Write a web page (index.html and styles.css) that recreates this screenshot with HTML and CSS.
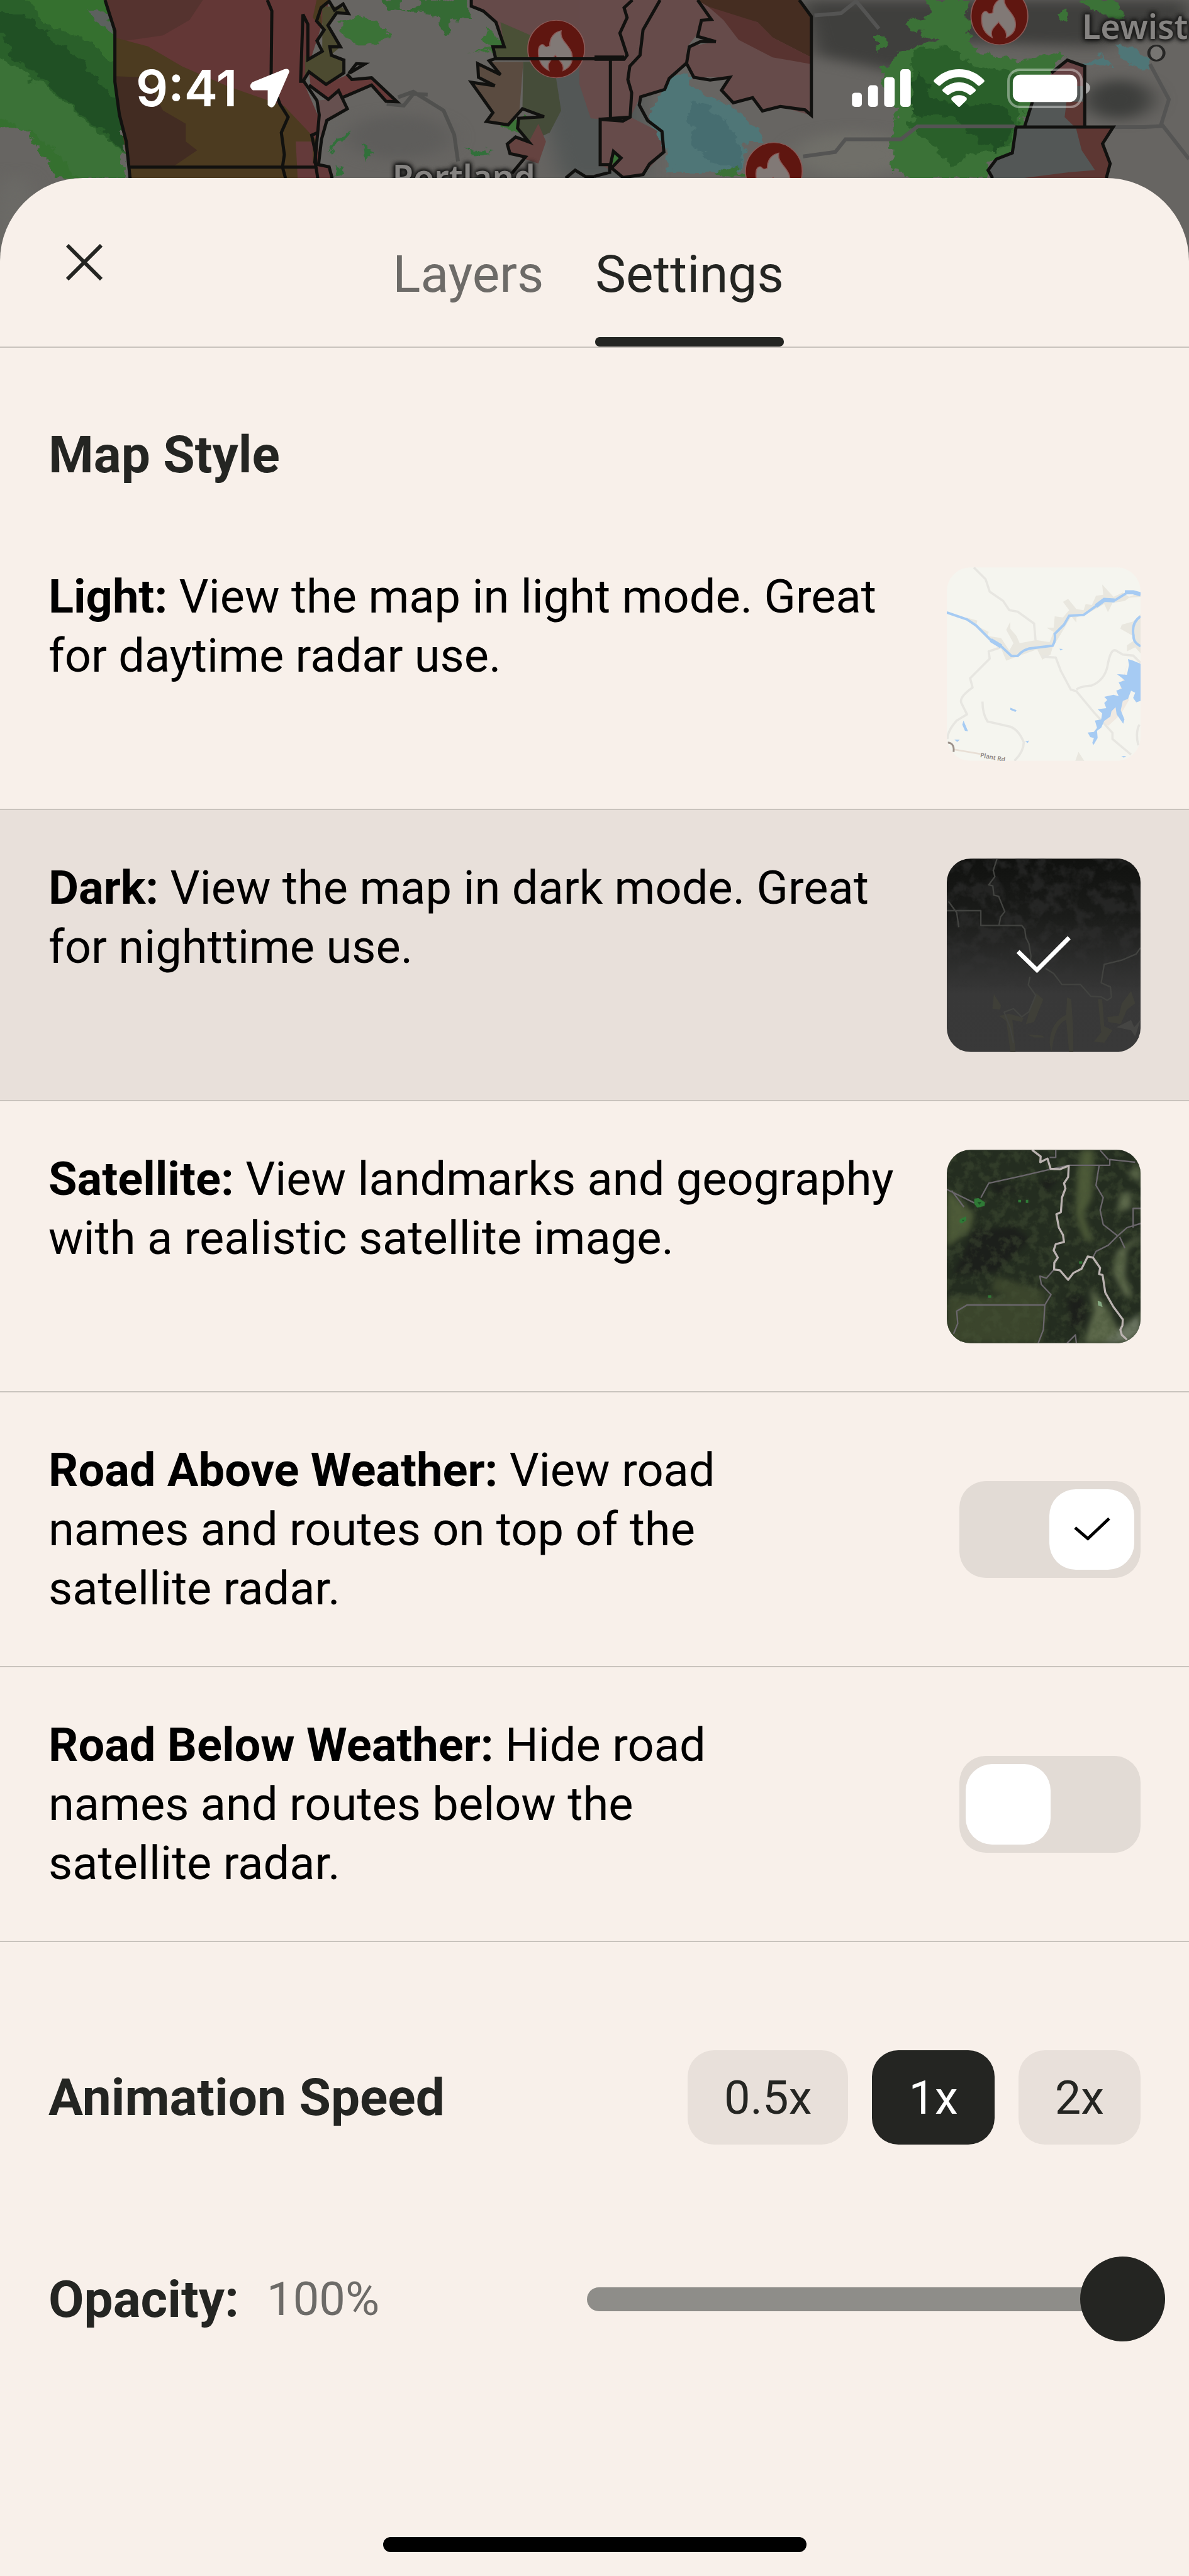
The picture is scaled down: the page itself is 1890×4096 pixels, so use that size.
FILE: index.html
```html
<!DOCTYPE html>
<html lang="en">
<head>
    <meta charset="UTF-8">
    <meta name="viewport" content="width=device-width, initial-scale=1.0">
    <title>Map Settings</title>
    <link rel="stylesheet" href="styles.css">
</head>
<body>

<!-- Radar map behind the sheet -->
<div class="map">
    <svg class="map-art" viewBox="0 0 3136 1568" preserveAspectRatio="none" aria-hidden="true">
        <defs>
            <filter id="rough" x="0" y="0" width="100%" height="100%" color-interpolation-filters="sRGB">
                <feTurbulence type="fractalNoise" baseFrequency="0.03 0.02" numOctaves="4" seed="4"/>
                <feDisplacementMap in="SourceGraphic" scale="50" xChannelSelector="R" yChannelSelector="G"/>
            </filter>
            <filter id="soft" color-interpolation-filters="sRGB"><feGaussianBlur stdDeviation="28"/></filter>
            <g id="fire">
                <ellipse rx="75" ry="130" fill="#5f1610"/>
                <path d="M-47 8C-46-20-38-22-34-20C-26-2-22-14-17-14C-18-50-6-76 13-83C8-40 36-18 41 20C46 60 36 84 18 98C22 66 8 56-2 28C-16 54-26 66-19 98C-40 80-48 50-47 8Z"/>
            </g>
        </defs>
        <rect width="3136" height="1568" fill="#676562"/>
        <g filter="url(#soft)">
            <path d="M2110 0H3136V90L2900 210L2500 190L2380 330L2150 250Z" fill="#3f3f3d"/>
            <ellipse cx="2950" cy="450" rx="90" ry="90" fill="#3d3e3c"/>
            <ellipse cx="2250" cy="700" rx="160" ry="100" fill="#706f69"/>
            <ellipse cx="1050" cy="620" rx="140" ry="100" fill="#5e5d5b"/>
            <path d="M1390 260H1700V806H1480Z" fill="#535756"/>
            <ellipse cx="40" cy="1050" rx="60" ry="260" fill="#6b6a66"/>
        </g>
        <g filter="url(#rough)">
            <path d="M-60-40H280L325 140V806H150L110 700L60 560L-60 600Z" fill="#35702f"/>
            <path d="M-60 160L60 260L180 430L330 700V806H210L120 640L40 560L-60 520Z" fill="#3b7237"/>
            <path d="M-40 0H70L130 120L240 190L330 330V700L230 560L110 380L-20 240Z" fill="#2a602a"/>
            <path d="M-20 60L60 60L200 260L330 480V690L200 500L90 330L20 240Z" fill="#205024"/>
            <path d="M230 40L290 60L300 160L260 120Z" fill="#5c615e"/>
            <path d="M900 90L970 70L1030 150L1000 200H950L900 160Z" fill="#3b7237"/>
            <path d="M1010 0H1060V40H1090L1110 0H1240V80H1200L1185 160L1160 130L1135 60L1080 50L1020 40Z" fill="#356a34"/>
            <path d="M950 640L985 700L960 720ZM880 640L930 590L860 700ZM890 740L920 790H880ZM1230 670L1300 690L1260 710Z" fill="#31703a"/>
            <path d="M1290 130L1340 210L1240 240H1310L1280 180ZM1320 560L1390 520V620Z" fill="#3b7237"/>
        </g>

        <!-- warning zones -->
        <path d="M275 0L303 140V370L315 520L333 640L343 806H755L748 700L840 740L838 520L800 370L870 0Z" fill="#633736"/>
        <path d="M278 0H535L500 90L430 160L308 190L303 140Z" fill="#55332f"/>
        <path d="M303 170L390 210L480 300L600 390L750 480L838 640L830 806H343L315 520L303 370Z" fill="#4c3b20"/>
        <path d="M303 345L385 350L430 500L490 560V640L520 680L460 750H341L333 640L315 520Z" fill="#422c22"/>
        <path d="M780 640H825V740L870 760L875 806H785Z" fill="#643a3a"/>
        <path d="M835 0H870L845 40L850 130L825 80Z" fill="#4c3b20"/>
        <path d="M850 30L900 30L920 62L888 58L865 115L898 212L872 250L905 272V330L860 382L815 325L805 370V250L818 270L850 230Z" fill="#4c4a30"/>
        <path d="M815 330L860 380L915 340L930 362L980 350L1047 455L1018 462L980 385L905 440L893 410L866 450L820 395Z" fill="#673a39"/>
        <path d="M836 455L866 450L893 410L916 492L862 545L845 640Z" fill="#66504f"/>
        <path d="M1240 0H1310L1560 0V260H1305L1300 212H1330L1308 100L1275 50L1243 28Z" fill="#654a49"/>
        <path d="M1320 100L1400 160V260H1305L1300 212H1330Z" fill="#4a5036"/>
        <path d="M1290 280H1380L1370 500L1340 565L1283 550L1300 510L1243 372L1305 388L1262 350L1260 288L1320 338Z" fill="#5a4b40"/>
        <path d="M1380 280H1460L1480 500L1450 600L1400 640L1365 580L1368 535L1435 528L1378 492Z" fill="#454c39"/>
        <path d="M1360 620L1395 642L1420 560L1440 640L1420 740L1385 720L1345 695L1338 652Z" fill="#654340"/>

        <g transform="translate(1568 0)">
            <path d="M-40 0H175L130 130L95 300L100 410L95 530L175 600L183 690L128 790L75 800L15 745V540L-10 535L-40 380Z" fill="#664b4a"/>
            <path d="M175 0H280L305 85L245 210L240 290L185 400L120 440L95 530V300L130 130Z" fill="#664b4a"/>
            <path d="M180 0H270L308 85L282 92L272 165L320 190L250 210L240 288L262 350L355 350L335 408L366 465L417 442L443 502L490 482L572 522V75L540 0Z" fill="#664b4a"/>
            <path d="M270 0H540L572 75V260L470 170L430 100L330 60Z" fill="#452d21"/>
            <path d="M300 30L430 100L470 170L572 260V290L470 260L380 180L340 90Z" fill="#583330"/>
            <g filter="url(#rough)">
                <path d="M205 350L240 320L262 400L360 480L440 600V640L400 640L390 800L280 780L200 780L180 660L140 520L190 400Z" fill="#4f7677"/>
                <path d="M250 450L330 520L390 650V760L310 740L260 650Z" fill="#466d70"/>
                <path d="M1290 290L1340 240L1370 300ZM1370 200L1440 220L1465 320L1400 290Z" fill="#4f7677"/>
                <path d="M880 0H990V210L1050 250L1130 280L1240 230L1130 560L1100 690L1040 730V806H820L780 760L790 700L780 600L800 500L770 430L760 310L810 230L900 180L830 130V90L880 80Z" fill="#3b7237"/>
                <path d="M850 220L930 210L1000 300L1110 330L1130 520L1090 660L990 700L940 750L880 640L830 560L860 460L830 330Z" fill="#2a602a"/>
                <path d="M860 320L880 440L960 470L1060 470L1110 560L1060 690L1000 620L940 520L850 520L830 440Z" fill="#205024"/>
                <path d="M1280 0H1370L1400 80L1330 60ZM1210 60L1260 40L1240 100ZM750 150L780 190L750 240ZM310 790L380 750L400 806Z" fill="#3b7237"/>
            </g>
            <path d="M550 708L635 688L662 630H808L852 572H1110M1370 575H1450L1500 570M1465 290L1515 450L1495 560L1568 720M580 70L650 60L690 5L750 130" fill="none" stroke="#545453" stroke-width="6" vector-effect="non-scaling-stroke"/>
            <path d="M1205 330L1247 272L1293 300V570L1368 575L1340 650L1360 740L1350 806H1050L1038 770L1060 720L1102 692L1112 575L1135 565L1155 450Z" fill="#535756"/>
            <path d="M1205 330L1247 272L1293 300V390H1200Z" fill="#664344"/>
            <path d="M1245 460H1293V570L1368 575L1340 650L1360 740L1350 806H1130L1250 780L1320 770L1285 680L1270 580L1240 530Z" fill="#5d3733"/>
            <path d="M45 690L70 712L48 750Z" fill="#3b7237"/>
        </g>

        <path d="M1020 470L1065 478L1090 425L1128 428M1050 440L1090 415L1170 500L1198 610L1208 730" fill="none" stroke="#50504e" stroke-width="6" vector-effect="non-scaling-stroke"/>

        <g fill="#817976" stroke="#8a5a57" stroke-width="3">
            <use href="#fire" x="1467" y="222"/>
            <use href="#fire" x="2636" y="72"/>
            <use href="#fire" x="2041" y="775"/>
        </g>

        <!-- zone borders -->
        <g fill="none" stroke="#11110f" stroke-width="5">
            <path vector-effect="non-scaling-stroke" d="M277 0L303 140V370L315 520L333 640L343 806M343 756H835M705 0L717 50L715 360L738 470L760 530L742 600L750 700L745 756L753 806M800 368H793L799 65L812 110V270L850 232L836 185L855 135L835 95L847 35L868 5L882 45L905 18L919 62L888 58L865 115L898 212H870L874 250L907 272V330L860 382L815 325L800 365L836 455L842 520L838 600L830 740M815 385L866 450L893 410L916 492L862 545L848 630L840 745L868 755L876 806M905 440L980 385L1018 458L1047 460L980 352L928 360L915 335M920 332L940 288L962 290L923 330M838 600L822 612L832 690V740L838 806M1243 0V28L1275 50L1308 100L1330 212H1300L1307 262M1568 266H1305L1290 275L1320 338L1260 288L1262 350L1305 388L1243 372L1300 510L1283 550L1340 565L1378 492L1435 528L1368 535L1365 580L1395 642L1360 620L1338 652L1345 695L1386 710L1350 785M1492 806L1517 770L1545 800H1568"/>
            <g transform="translate(1568 0)">
                <path vector-effect="non-scaling-stroke" d="M100 0L78 35L86 80L67 150L86 250L78 268H0M0 258H78M42 268V535M173 0L128 135L120 250L93 300L88 360L98 420L94 530L75 548L15 540V745H42L50 685L70 715L45 760L75 803L128 790L145 742L183 688L178 595L140 545L118 475L122 438L185 405L197 355L243 285L250 212L280 188H320L272 165L282 92L308 88L272 0M243 288L262 350L305 362L357 350L335 408L366 465L417 442L443 502L490 482L555 497L572 522V75L540 0M12 540L92 530M0 798L40 780V750M1205 330L1247 272L1293 300V570M1110 575L1368 575L1340 650L1360 740L1350 806M1155 460L1135 570M1112 575L1102 692L1060 720L1038 770L1050 806"/>
            </g>
        </g>
        <ellipse cx="3050" cy="240" rx="20" ry="34" fill="#777572" stroke="#262625" stroke-width="8"/>
    </svg>
    <span class="map-label map-label-portland">Portland</span>
    <span class="map-label map-label-lewiston">Lewiston</span>
</div>

<!-- Phone status bar -->
<div class="status-bar">
    <div class="status-left">
        <span class="time">9:41</span>
        <svg class="icon-location" viewBox="0 0 64 64" aria-label="Location in use"><path d="M64 5L41 58Q36 67 29 59V35H5Q-3 29 4 22L56 1Q63-1 64 5Z"/></svg>
    </div>
    <div class="status-right">
        <svg class="icon-signal" viewBox="0 0 95 61" aria-label="Signal">
            <rect y="38" width="16" height="23" rx="5"/><rect x="26" y="26" width="16" height="35" rx="5"/><rect x="52" y="13" width="17" height="48" rx="5"/><rect x="78" width="17" height="61" rx="5"/>
        </svg>
        <svg class="icon-wifi" viewBox="0 0 82 61" aria-label="Wi-Fi">
            <path d="M1 17Q18 0 41 0T81 17Q83 19 81 21L75 26Q73 28 71 26Q58 13 41 13T11 26Q9 28 7 26L1 21Q-1 19 1 17Z"/>
            <path d="M15 32Q26 21 41 21T67 32Q69 34 67 36L61 41Q59 43 57 41Q50 35 41 35T25 41Q23 43 21 41L15 36Q13 34 15 32Z"/>
            <path d="M29 46Q34 42 41 42T53 46Q54 48 53 50L43 60Q41 62 39 60L29 50Q28 48 29 46Z"/>
        </svg>
        <svg class="icon-battery" viewBox="0 0 134 64" aria-label="Battery full">
            <rect x="2" y="2" width="118" height="60" rx="18" fill="none" stroke="#fff" stroke-opacity=".4" stroke-width="4"/>
            <rect x="9" y="10" width="104" height="44" rx="12"/>
            <path d="M127 22Q134 25 134 31T127 41Z" fill-opacity=".5"/>
        </svg>
    </div>
</div>

<main class="sheet">
    <header class="sheet-header">
        <button class="close" type="button" aria-label="Close">
            <svg viewBox="0 0 58 58"><path d="M2 2L56 56M56 2L2 56"/></svg>
        </button>
        <nav class="tabs">
            <button class="tab" type="button">Layers</button>
            <button class="tab active" type="button">Settings</button>
        </nav>
    </header>

    <h2 class="section-title">Map Style</h2>

    <label class="row">
        <input class="hidden-input" type="radio" name="mapStyle">
        <span class="row-text"><b>Light:</b> View the map in light mode. Great for daytime radar use.</span>
        <svg class="preview" viewBox="237 168 939 937" aria-hidden="true">
            <rect x="237" y="168" width="939" height="937" fill="#f5f5ef"/>
            <g fill="#e9e7df">
                <path d="M330 410L385 425L380 450L440 480L435 500L500 510L540 570L560 535L525 470L545 430V465L575 500L590 535L670 520L735 530L755 480L720 460H755L760 405L800 410L830 375L800 335L825 320L865 370L900 375L910 345L940 350L960 305L995 300L990 250L1045 310L1090 290L1120 310L1176 290V310L1120 315L1100 330L1040 340L1018 385L1000 345L930 385L865 410V435L840 405L790 490L750 555L740 590L700 615L675 565L590 595L525 620L500 560L440 520Z"/>
                <path d="M1176 395L1140 430L1085 445L1078 465L1140 500V525L1110 545V575L1150 555L1176 585ZM875 1062L903 1105H860Z"/>
            </g>
            <path d="M1115 620L1100 680L1120 810L1080 880L1020 935L985 920L1060 820Z" fill="#f0e9e1"/>
            <g fill="none" stroke="#e7e6e1" stroke-width="11" stroke-linejoin="round">
                <path d="M368 168L425 225L445 285L510 330L540 375L580 382L660 440L667 520M500 555L440 575L445 610L350 705L362 750Q290 800 310 830L335 880L285 910Q240 960 240 1000M410 818Q410 880 435 915L545 940Q585 955 610 1015Q610 1060 565 1105M700 600L765 605L790 670L838 760L865 768L950 870L1040 970V1000L1130 1075M865 760Q880 745 940 740Q1000 715 1015 650Q1030 560 1055 570L1090 590L1140 595L1176 630M1170 930Q1150 970 1165 1030"/>
            </g>
            <path d="M237 386L335 420L380 450L450 520L500 550L550 597H580Q610 560 660 558L750 547Q765 525 760 490L805 445L830 402L900 398L960 355L1000 325L1050 328L1115 288L1176 298M1176 405Q1130 435 1142 500Q1140 530 1176 550" fill="none" stroke="#a6cbf3" stroke-width="12"/>
            <path d="M450 520L500 550M960 355L1000 325L1050 328M1100 288H1140L1176 298" fill="none" stroke="#a6cbf3" stroke-width="20"/>
            <path d="M1115 612L1140 620L1176 635V815L1155 822L1140 800L1150 775L1130 765L1115 805L1090 815L1080 860L1098 905L1092 925L1060 880L1055 845L1035 865L1030 890L1000 912L985 945L965 960L968 995L948 1028L942 1018L950 995L932 990L920 968L950 965L965 945L955 910L985 905L990 875L968 855L1010 850L1000 825L1015 810L1000 795L1045 785L1070 792L1058 765L1085 755L1070 725L1100 715L1062 685L1110 688L1120 640ZM545 848L575 860L570 868L545 858ZM318 910L340 962L325 960L312 930ZM273 1002H300L288 1014ZM617 1012L635 1007L630 1018ZM783 562L800 563L788 570ZM1083 1082H1107L1095 1090Z" fill="#a6cbf3"/>
            <path d="M270 1050L400 1072" stroke="#e8dfd5" stroke-width="8"/>
            <path d="M242 1017Q275 1020 270 1062" stroke="#9c928b" stroke-width="9" fill="none"/>
            <text class="preview-text" x="398" y="1087" transform="rotate(11 398 1087)">Plant Rd</text>
        </svg>
    </label>

    <label class="row selected">
        <input class="hidden-input" type="radio" name="mapStyle" checked>
        <span class="row-text"><b>Dark:</b> View the map in dark mode. Great for nighttime use.</span>
        <svg class="preview" viewBox="237 168 939 937" aria-hidden="true">
            <defs>
                <linearGradient id="night" x2="0" y2="1"><stop offset="0" stop-color="#10110f"/><stop offset=".3" stop-color="#1b1c1a"/><stop offset=".7" stop-color="#383838"/><stop offset="1" stop-color="#393939"/></linearGradient>
                <filter id="terrain" x="0" y="0" width="100%" height="100%" color-interpolation-filters="sRGB">
                    <feTurbulence type="fractalNoise" baseFrequency="0.014" numOctaves="4" seed="8"/>
                    <feColorMatrix values="0 0 0 0 .2  0 0 0 0 .2  0 0 0 0 .2  0 0 0 4 -1.7"/>
                </filter>
            </defs>
            <rect x="237" y="168" width="939" height="937" fill="url(#night)"/>
            <rect x="237" y="168" width="939" height="620" filter="url(#terrain)" opacity=".5"/>
            <path d="M465 825L500 880L495 900L458 895ZM670 820L705 850L660 960L620 970L640 900ZM820 840L840 850L850 1000V1105H830L815 950Q760 970 745 1105L735 1060Q740 960 815 925ZM970 850H990L1000 980L1040 1000L1000 1060L950 1055L985 1010ZM1130 810L1150 870L1110 900L1080 970L1020 960L1015 935L1070 930L1085 870ZM625 1020L700 1025L710 1035L660 1035ZM490 930L540 920L610 940L600 960L555 950L570 1105H545L525 955Z" fill="#3f3f38"/>
            <path d="M480 170L462 225L470 255L440 295L460 300L465 345L488 350L518 425L498 450L490 490M237 420H402V492H600L615 510L620 550L635 580L645 640L640 680M245 375L285 430L295 500M1176 600L1155 630L1085 660L1000 680L985 770L1030 790L1035 840L1015 855L985 838L935 835L885 778H795L755 725L715 700M640 740L632 780L668 830L635 910L600 935L560 895L515 912L545 990L560 1060" fill="none" stroke="#424340" stroke-width="7" stroke-linejoin="round"/>
            <path d="M1060 985L1130 950L1145 985L1176 950L1150 1030L1130 1000Z" fill="#454543"/>
            <path d="M582 618L674 708L830 551" fill="none" stroke="#fff" stroke-width="21"/>
        </svg>
    </label>

    <label class="row">
        <input class="hidden-input" type="radio" name="mapStyle">
        <span class="row-text"><b>Satellite:</b> View landmarks and geography with a realistic satellite image.</span>
        <svg class="preview" viewBox="237 168 939 937" aria-hidden="true">
            <defs>
                <filter id="forest" x="0" y="0" width="100%" height="100%" color-interpolation-filters="sRGB">
                    <feTurbulence type="fractalNoise" baseFrequency="0.022" numOctaves="5" seed="11"/>
                    <feColorMatrix values="0 0 0 0 .28  0 0 0 0 .33  0 0 0 0 .22  0 0 0 4 -1.8"/>
                </filter>
                <filter id="haze" color-interpolation-filters="sRGB"><feGaussianBlur stdDeviation="14"/></filter>
            </defs>
            <rect x="237" y="168" width="939" height="937" fill="#242d20"/>
            <g filter="url(#haze)">
                <path d="M237 350L370 480L350 560L237 640ZM890 168H950L940 400L900 480L950 620L900 600L860 480L870 280Z" fill="#4d5a38"/>
                <path d="M1176 600L1110 650L1100 780L1140 880L1100 880L1040 760L1060 660L1176 580ZM930 830L1010 930L1100 1105H900L950 950ZM1176 240V330L1110 280ZM1080 380L1130 370V450L1060 470Z" fill="#5d694b"/>
                <path d="M237 880H720L700 1105H237ZM470 780L740 860L600 900L450 850Z" fill="#3b452c"/>
                <path d="M370 560L560 540L640 600L480 760L270 770ZM440 320L600 360L480 380ZM690 320L790 290L720 380ZM820 880H900L910 1000L840 1040Z" fill="#1c1f1b"/>
                <path d="M1120 1000L1176 960V1080L1090 1105H1000Z" fill="#6a7460"/>
            </g>
            <rect x="237" y="168" width="939" height="937" filter="url(#forest)" opacity=".4"/>
            <g fill="none" stroke="#6a666b" stroke-width="7" stroke-linejoin="round">
                <path d="M402 400L440 330L600 295L740 262L830 243H1027V215L1150 228M980 170L1020 215M975 245L960 340L995 400L980 460L995 530L1065 585L1110 545L1176 525M1065 585L1020 630L960 660L945 690M1075 590L1100 645M1140 545V452H1176M755 750L720 790L688 780L695 820L742 870L712 920H335L285 950L290 1010L270 1060M712 920L705 1040L680 1105M237 360L370 425M260 365L320 445M765 168V205H735M820 1105L860 1065L865 1105"/>
            </g>
            <path d="M650 168L692 200L690 228L725 210L740 260L785 262L828 245L825 300L805 330L812 355L795 400L790 470L768 480L780 545L800 580L805 615L765 625L755 655L775 690L758 715L757 748L785 752L825 798L850 765L890 745L920 685L945 690L980 740L975 770L992 775L1005 860L1045 930L1090 990L1088 1020L1078 1040L1085 1065L1110 1088" fill="none" stroke="#bbb3b1" stroke-width="10" stroke-linejoin="round"/>
            <path d="M370 405L390 402L422 422L420 440L385 448L370 430ZM300 505L330 490L332 510L310 525L298 518ZM583 410H597V422H583ZM620 410H632V425H620ZM878 708H893V720H878ZM437 873H452V886H437Z" fill="#2f7a36"/>
            <path d="M385 420L405 420L395 435ZM310 508H322L316 515Z" fill="#1f5226"/>
            <path d="M968 900L985 905L992 930L970 922Z" fill="#86a983"/>
        </svg>
    </label>

    <div class="row row-toggle">
        <label class="row-text" for="roadAbove"><b>Road Above Weather:</b> View road names and routes on top of the satellite radar.</label>
        <span class="switch">
            <input type="checkbox" id="roadAbove" checked>
            <svg class="switch-check" viewBox="0 0 60 38" aria-hidden="true"><path d="M2 17L23 35L58 2"/></svg>
        </span>
    </div>

    <div class="row row-toggle">
        <label class="row-text" for="roadBelow"><b>Road Below Weather:</b> Hide road names and routes below the satellite radar.</label>
        <span class="switch">
            <input type="checkbox" id="roadBelow">
            <svg class="switch-check" viewBox="0 0 60 38" aria-hidden="true"><path d="M2 17L23 35L58 2"/></svg>
        </span>
    </div>

    <div class="speed">
        <h2>Animation Speed</h2>
        <div class="speed-options">
            <button type="button">0.5x</button>
            <button type="button" class="active">1x</button>
            <button type="button">2x</button>
        </div>
    </div>

    <div class="opacity">
        <label for="opacity">Opacity:</label>
        <output for="opacity">100%</output>
        <input type="range" id="opacity" min="0" max="100" value="100">
    </div>

    <div class="home-indicator"></div>
</main>

</body>
</html>
```
FILE: styles.css
```css
* {
    box-sizing: border-box;
}
body {
    font-family: Roboto, "Noto Sans", sans-serif;
    margin: 0;
    min-height: 100vh;
    display: flex;
    flex-direction: column;
    position: relative;
    background-color: #676562;
    color: #000;
}
button {
    font-family: inherit;
    border: none;
    padding: 0;
    cursor: pointer;
}
svg {
    display: block;
    flex-shrink: 0;
}

/* Map */
.map {
    position: absolute;
    top: 0;
    left: 0;
    width: 100%;
    height: 551px;
    overflow: hidden;
}
.map-art {
    width: 100%;
    height: 100%;
}
.map-label {
    position: absolute;
    font-family: "Noto Sans", sans-serif;
    font-size: 54px;
    font-weight: 600;
    line-height: 60px;
    color: #858381;
    text-shadow: 0 0 8px #1c1c1b, 0 0 8px #1c1c1b, 0 0 6px #1c1c1b, 0 0 6px #1c1c1b, 0 0 4px #1c1c1b;
}
.map-label-portland {
    left: 33%;
    top: 250px;
}
.map-label-lewiston {
    left: 91%;
    top: 11px;
}

/* Status bar */
.status-bar {
    position: relative;
    height: 283px;
    padding: 108px 157px 0 216px;
    display: flex;
    justify-content: space-between;
    align-items: flex-start;
    color: #fff;
    fill: #fff;
}
.status-left,
.status-right {
    display: flex;
    align-items: center;
    height: 64px;
}
.status-left {
    gap: 20px;
}
.status-right {
    gap: 36px;
}
.time {
    font-family: Inter, sans-serif;
    font-size: 80px;
    font-weight: 600;
    line-height: 64px;
}
.icon-location {
    width: 63px;
    height: 63px;
}
.icon-signal {
    width: 94px;
    height: 60px;
}
.icon-wifi {
    width: 81px;
    height: 60px;
}
.icon-battery {
    width: 132px;
    height: 63px;
}

/* Sheet */
.sheet {
    position: relative;
    flex: 1;
    display: flex;
    flex-direction: column;
    background-color: #f8f0ea;
    border-radius: 132px 132px 0 0;
}
.sheet-header {
    display: grid;
    grid-template-columns: 1fr auto 1fr;
    height: 270px;
    border-bottom: 2px solid #c9c3bd;
}
.close {
    justify-self: start;
    align-self: center;
    margin-left: 77px;
    padding: 28px;
    background: none;
}
.close svg {
    width: 58px;
    height: 58px;
    stroke: #242522;
    stroke-width: 6;
}
.tabs {
    display: flex;
    gap: 82px;
    padding-right: 20px;
}
.tab {
    position: relative;
    padding-top: 38px;
    background: none;
    font-size: 82px;
    color: #6d6b68;
}
.tab.active {
    color: #242522;
}
.tab.active::after {
    content: '';
    position: absolute;
    left: 0;
    bottom: 0;
    width: 100%;
    height: 15px;
    border-radius: 7px;
    background-color: #242522;
}
h2 {
    margin: 0;
    font-size: 82px;
    font-weight: 700;
    line-height: 104px;
    color: #242522;
}
.section-title {
    padding: 118px 77px 50px;
}

/* Setting rows */
.row {
    display: flex;
    align-items: flex-start;
    justify-content: space-between;
    gap: 72px;
    padding: 77px 77px 76px;
    border-bottom: 2px solid #c9c3bd;
    cursor: pointer;
}
.row.selected {
    background-color: #e8e0da;
}
.row-text {
    flex: 1;
    font-size: 74px;
    line-height: 94px;
}
.row-text b {
    font-weight: 700;
}
.hidden-input {
    position: absolute;
    opacity: 0;
}
.preview {
    width: 308px;
    height: 308px;
    border-radius: 38px;
}
.preview-text {
    font-family: "Noto Sans", sans-serif;
    font-size: 30px;
    font-weight: 600;
    fill: #8b8078;
}
.row-toggle {
    align-items: center;
}
.row-toggle .row-text {
    max-width: 1160px;
}

/* Switch */
.switch {
    position: relative;
}
.switch input {
    appearance: none;
    display: flex;
    width: 288px;
    height: 154px;
    margin: 0;
    padding: 13px 10px;
    border-radius: 42px;
    background-color: #e2dbd5;
    cursor: pointer;
}
.switch input::before {
    content: '';
    width: 135px;
    border-radius: 42px;
    background-color: #fff;
}
.switch input:checked {
    justify-content: flex-end;
}
.switch-check {
    position: absolute;
    right: 48px;
    top: 57px;
    width: 58px;
    height: 38px;
    fill: none;
    stroke: #000;
    stroke-width: 5;
    pointer-events: none;
}
.switch input:not(:checked) + .switch-check {
    display: none;
}

/* Animation speed */
.speed {
    display: flex;
    align-items: center;
    justify-content: space-between;
    padding: 172px 77px 0;
}
.speed-options {
    display: flex;
    gap: 38px;
}
.speed-options button {
    height: 150px;
    padding: 0 58px;
    border-radius: 42px;
    background-color: #e8e0da;
    color: #242522;
    font-size: 74px;
}
.speed-options button.active {
    background-color: #242522;
    color: #fff;
}

/* Opacity */
.opacity {
    display: flex;
    align-items: center;
    padding: 178px 38px 0 77px;
}
.opacity label {
    font-size: 82px;
    font-weight: 700;
    color: #242522;
}
.opacity output {
    margin-left: 44px;
    font-size: 74px;
    color: #6d6b68;
}
.opacity input {
    appearance: none;
    flex: 0 1 919px;
    height: 135px;
    margin: 0 0 0 auto;
    background: none;
}
.opacity input::-webkit-slider-runnable-track {
    height: 38px;
    border-radius: 19px;
    background-color: #8e8d89;
}
.opacity input::-webkit-slider-thumb {
    appearance: none;
    width: 135px;
    height: 135px;
    margin-top: -49px;
    border-radius: 50%;
    background-color: #242522;
}
.home-indicator {
    width: 100%;
    max-width: 673px;
    height: 24px;
    margin: auto auto 38px;
    border-radius: 12px;
    background-color: #000;
}
```
